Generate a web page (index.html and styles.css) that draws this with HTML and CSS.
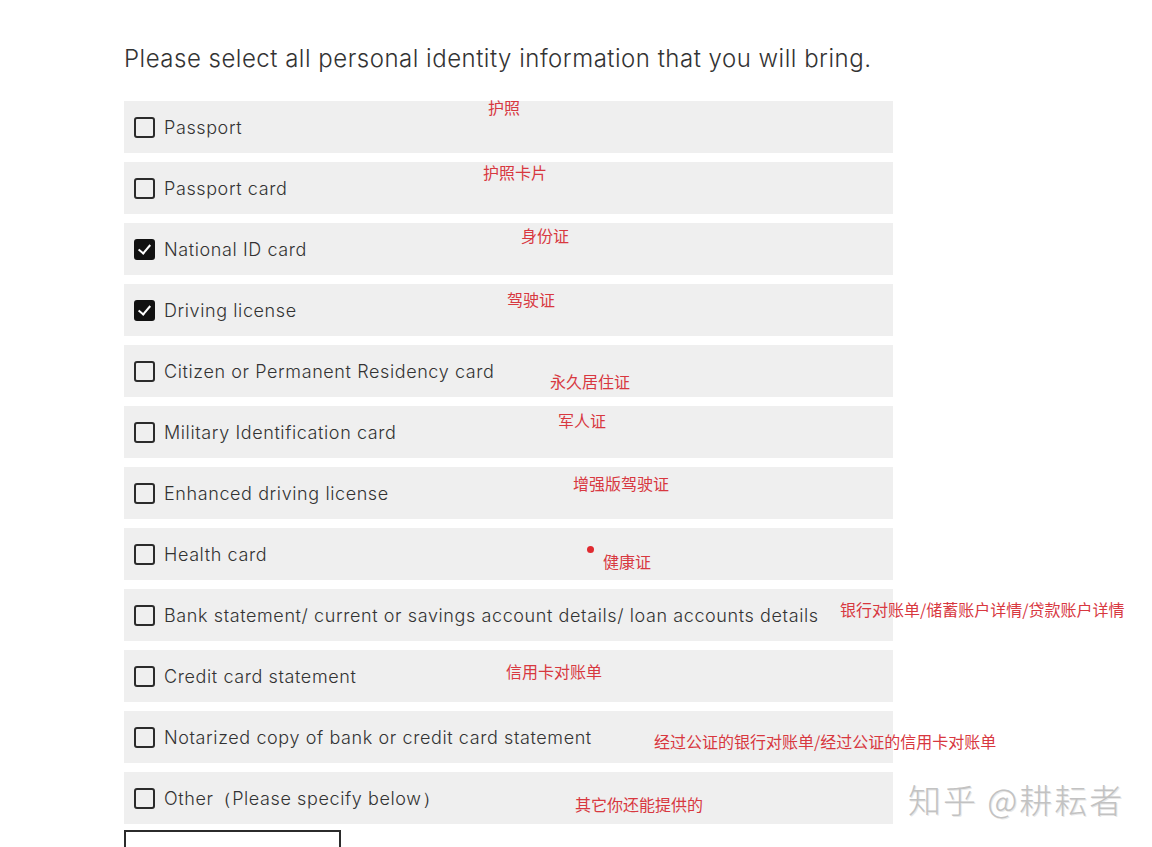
FILE: index.html
```html
<!DOCTYPE html>
<html lang="en">
<head>
  <meta charset="UTF-8">
  <meta name="viewport" content="width=device-width, initial-scale=1.0">
  <title>Identity information</title>
  <link rel="stylesheet" href="styles.css">
</head>
<body>
  <div class="page">
    <h1 class="question">Please select all personal identity information that you will bring.</h1>

    <div class="options">
      <label class="option">
        <span class="box"></span><span class="label">Passport</span>
        <span class="note n1">护照</span>
      </label>
      <label class="option">
        <span class="box"></span><span class="label">Passport card</span>
        <span class="note n2">护照卡片</span>
      </label>
      <label class="option">
        <span class="box checked"></span><span class="label">National ID card</span>
        <span class="note n3">身份证</span>
      </label>
      <label class="option">
        <span class="box checked"></span><span class="label">Driving license</span>
        <span class="note n4">驾驶证</span>
      </label>
      <label class="option">
        <span class="box"></span><span class="label">Citizen or Permanent Residency card</span>
        <span class="note n5">永久居住证</span>
      </label>
      <label class="option">
        <span class="box"></span><span class="label">Military Identification card</span>
        <span class="note n6">军人证</span>
      </label>
      <label class="option">
        <span class="box"></span><span class="label">Enhanced driving license</span>
        <span class="note n7">增强版驾驶证</span>
      </label>
      <label class="option">
        <span class="box"></span><span class="label">Health card</span>
        <span class="dot"></span>
        <span class="note n8">健康证</span>
      </label>
      <label class="option">
        <span class="box"></span><span class="label">Bank statement/ current or savings account details/ loan accounts details</span>
        <span class="note n9">银行对账单/储蓄账户详情/贷款账户详情</span>
      </label>
      <label class="option">
        <span class="box"></span><span class="label">Credit card statement</span>
        <span class="note n10">信用卡对账单</span>
      </label>
      <label class="option">
        <span class="box"></span><span class="label">Notarized copy of bank or credit card statement</span>
        <span class="note n11">经过公证的银行对账单/经过公证的信用卡对账单</span>
      </label>
      <label class="option">
        <span class="box"></span><span class="label">Other（Please specify below）</span>
        <span class="note n12">其它你还能提供的</span>
      </label>
    </div>

    <div class="other-input"></div>
  </div>

  <div class="watermark">知乎 @耕耘者</div>
</body>
</html>
```

FILE: styles.css
```css
body {
  margin: 0;
  font-family: Inter, "Noto Sans", sans-serif;
  color: #333;
  background: #fff;
  overflow: hidden;
}
.page {
  width: 769px;
  padding: 44px 0 0 124px;
}
.question {
  margin: 0 0 27px;
  font-size: 24px;
  font-weight: 300;
  line-height: 30px;
  letter-spacing: 0.5px;
  color: #333;
}
.options {
  display: flex;
  flex-direction: column;
  gap: 9px;
}
.option {
  position: relative;
  display: flex;
  align-items: center;
  height: 52px;
  padding-left: 10px;
  background: #efefef;
}
.box {
  box-sizing: border-box;
  width: 21px;
  height: 21px;
  border: 2px solid #2b2b2b;
  border-radius: 3px;
  margin-right: 9px;
  flex: none;
  position: relative;
}
.box.checked {
  background: #111;
  border-color: #111;
}
.box.checked::after {
  content: "";
  position: absolute;
  left: 5px;
  top: 1px;
  width: 5px;
  height: 10px;
  border: solid #fff;
  border-width: 0 2.5px 2.5px 0;
  transform: rotate(40deg);
}
.label {
  font-size: 18px;
  font-weight: 300;
  letter-spacing: 0.6px;
  color: #333;
  margin-top: 1px;
}
.note {
  position: absolute;
  font-family: "Noto Sans CJK SC", sans-serif;
  font-size: 16px;
  line-height: 18px;
  color: #d8383f;
  white-space: nowrap;
}
.n1 { left: 364px; top: -3px; }
.n2 { left: 359px; top: 1px; }
.n3 { left: 397px; top: 3px; }
.n4 { left: 383px; top: 6px; }
.n5 { left: 426px; top: 27px; }
.n6 { left: 434px; top: 5px; }
.n7 { left: 449px; top: 7px; }
.n8 { left: 479px; top: 24px; }
.n9 { left: 716px; top: 11px; }
.n10 { left: 382px; top: 12px; }
.n11 { left: 530px; top: 21px; }
.n12 { left: 451px; top: 23px; }
.dot {
  position: absolute;
  left: 463px;
  top: 18px;
  width: 7px;
  height: 7px;
  border-radius: 50%;
  background: #e02a30;
}
.other-input {
  width: 217px;
  height: 40px;
  box-sizing: border-box;
  margin-top: 6px;
  border: 2px solid #2b2b2b;
}
.watermark {
  position: absolute;
  left: 908px;
  top: 779px;
  font-family: "Noto Sans CJK SC", sans-serif;
  font-size: 33px;
  font-weight: 300;
  line-height: 40px;
  letter-spacing: 2px;
  color: #c2c2c2;
  text-shadow: 1px 1px 0 #e8e8e8;
  white-space: nowrap;
}
```
